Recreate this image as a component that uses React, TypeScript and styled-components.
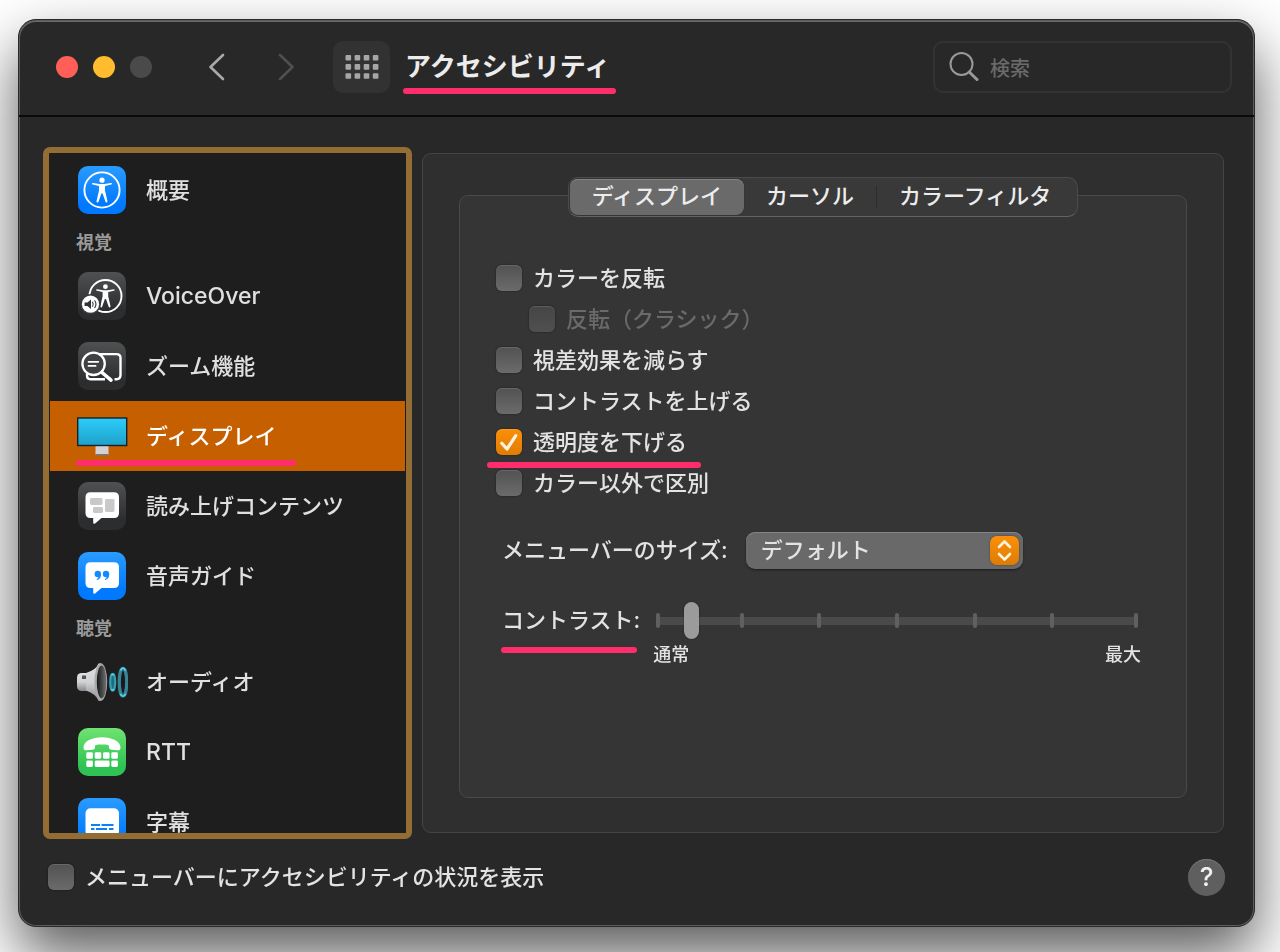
import React, { useState } from "react";
import styled, { createGlobalStyle, css } from "styled-components";

const GlobalStyle = createGlobalStyle`
  * { box-sizing: border-box; }
  body {
    margin: 0;
    background: #ffffff;
    color: #e3e3e3;
    font-family: Inter, "Noto Sans CJK JP", sans-serif;
    font-size: 22px;
    line-height: 32px;
    font-weight: 500;
  }
  button, input, select { font: inherit; color: inherit; }
`;

const Page = styled.div`
  display: flex;
  height: 100vh;
  min-height: 640px;
  padding: 19px 25px 25px 18px;
  overflow: hidden;
`;

const Window = styled.div`
  flex: 1;
  min-width: 0;
  display: flex;
  flex-direction: column;
  background: #282828;
  border: 1px solid #2a2a2a;
  border-radius: 18px;
  box-shadow: inset 0 0 0 1px #5c5c5c, inset 0 1px 0 1px #6a6a6a, 0 28px 60px rgba(0, 0, 0, 0.65);
`;

/* Toolbar */

const Toolbar = styled.header`
  display: flex;
  align-items: center;
  height: 97px;
  padding: 0 22px 1px 37px;
  border-bottom: 2px solid #0a0a0a;
`;

const Lights = styled.div`
  display: flex;
  gap: 15px;
`;

const Light = styled.button<{ $color: string }>`
  width: 22px;
  height: 22px;
  padding: 0;
  border: 0;
  border-radius: 50%;
  background: ${(p) => p.$color};
`;

const History = styled.nav`
  display: flex;
  gap: 37px;
  margin: 0 31px 0 49px;
`;

const ArrowButton = styled.button`
  display: flex;
  align-items: center;
  justify-content: center;
  width: 32px;
  height: 32px;
  padding: 0;
  border: 0;
  background: none;
  color: #a9a9a9;
  &:disabled { color: #505050; }
`;

const GridButton = styled.button`
  display: flex;
  align-items: center;
  justify-content: center;
  width: 57px;
  height: 52px;
  padding: 0;
  border: 0;
  border-radius: 10px;
  background: #323232;
`;

const Title = styled.h1`
  position: relative;
  margin: 0 auto 0 15px;
  font-size: 26px;
  line-height: 38px;
  font-weight: 700;
  color: #ececec;
`;

const SearchBox = styled.label`
  display: flex;
  align-items: center;
  gap: 11px;
  width: 299px;
  height: 52px;
  padding: 0 14px;
  border: 2px solid #333333;
  border-radius: 10px;
`;

const SearchInput = styled.input`
  flex: 1;
  min-width: 0;
  padding: 3px 0 0;
  border: 0;
  outline: 0;
  background: none;
  font-size: 20px;
  &::placeholder { color: #6a6a6a; opacity: 1; }
`;

/* Pink marker line drawn below a label */
const Marker = styled.span<{ $left: number; $right: number; $bottom: number }>`
  position: absolute;
  z-index: 1;
  left: ${(p) => p.$left}px;
  right: ${(p) => p.$right}px;
  bottom: ${(p) => p.$bottom}px;
  height: 6px;
  border-radius: 3px;
  background: #ff2d6b;
`;

/* Sidebar */

const Main = styled.main`
  flex: 1;
  min-height: 0;
  display: flex;
  gap: 10px;
  padding: 30px 30px 0 24px;
`;

const Sidebar = styled.ul`
  flex: none;
  width: 369px;
  margin: 0;
  padding: 2px 1px 0;
  list-style: none;
  overflow-y: auto;
  scrollbar-width: none;
  border: 6px solid #936d34;
  border-radius: 7px;
  background: #1e1e1e;
`;

const GroupHeading = styled.li`
  height: 36px;
  padding-left: 26px;
  font-size: 18px;
  line-height: 36px;
  font-weight: 700;
  color: #9a9a9a;
`;

const NavItem = styled.li``;

const NavButton = styled.button<{ $selected: boolean }>`
  display: flex;
  align-items: center;
  gap: 18px;
  width: 100%;
  height: 70px;
  padding: 0 26px;
  border: 0;
  text-align: left;
  background: ${(p) => (p.$selected ? "#c65f00" : "none")};
  color: ${(p) => (p.$selected ? "#ffffff" : "#e0e0e0")};
`;

const NavLabel = styled.span<{ $latin: boolean }>`
  position: relative;
  font-size: ${(p) => (p.$latin ? 23 : 22)}px;
`;

const Tile = styled.svg`
  flex: none;
  display: block;
  width: 52px;
  height: 52px;
`;

/* Right-hand panel */

const Panel = styled.section`
  flex: 1;
  min-width: 0;
  display: flex;
  flex-direction: column;
  margin: 6px 0;
  padding: 23px 36px 34px;
  border: 1px solid #454545;
  border-radius: 9px;
  background: #2f2f2f;
`;

const Tabs = styled.div`
  z-index: 1;
  align-self: center;
  display: flex;
  align-items: center;
  height: 40px;
  margin-bottom: -22px;
  padding: 1px;
  border: 1px solid #4b4b4b;
  border-bottom-color: #636363;
  border-radius: 10px;
  background: #393939;
`;

const Tab = styled.button<{ $selected: boolean }>`
  height: 36px;
  padding: 0 22px 3px;
  border: 0;
  border-radius: 8px;
  line-height: 32px;
  color: #ececec;
  background: none;
  &:last-child { padding-right: 25px; }
  ${(p) =>
    p.$selected &&
    css`
      background: #6a6a6a;
      box-shadow: inset 0 1px 0 #828282, 0 0 1px #1c1c1c;
    `}
`;

const TabDivider = styled.span`
  width: 1px;
  height: 22px;
  background: #2c2c2c;
`;

const Group = styled.div`
  flex: 1;
  min-height: 0;
  padding: 61px 45px 20px 36px;
  border: 1px solid #494949;
  border-radius: 9px;
  background: #353535;
`;

const CheckLabel = styled.label<{ $indent?: boolean; $dim?: boolean }>`
  position: relative;
  display: flex;
  align-items: center;
  gap: 11px;
  width: fit-content;
  height: 41px;
  margin-left: ${(p) => (p.$indent ? 33 : 0)}px;
  color: ${(p) => (p.$dim ? "#6a6a6a" : "#e3e3e3")};
`;

const CheckFrame = styled.span`
  position: relative;
  display: block;
  width: 26px;
  height: 26px;
`;

const CheckInput = styled.input`
  appearance: none;
  display: block;
  width: 26px;
  height: 26px;
  margin: 0;
  border-radius: 6px;
  background: linear-gradient(#525252, #6b6b6b);
  box-shadow: inset 0 1px 0 rgba(255, 255, 255, 0.12), 0 0 2px rgba(0, 0, 0, 0.5);
  &:disabled { background: linear-gradient(#454545, #505050); }
  &:checked { background: linear-gradient(#fb8f07, #df7d04); }
  &:checked + svg { display: block; }
`;

const Tick = styled.svg`
  display: none;
  position: absolute;
  inset: 0;
  pointer-events: none;
`;

const Field = styled.div<{ $gap: number; $top: number }>`
  display: flex;
  align-items: flex-start;
  gap: ${(p) => p.$gap}px;
  margin-top: ${(p) => p.$top}px;
  padding-left: 6px;
`;

const FieldLabel = styled.label`
  position: relative;
  white-space: nowrap;
  line-height: 36px;
`;

const SelectFrame = styled.div`
  position: relative;
  width: 277px;
`;

const Select = styled.select`
  appearance: none;
  display: block;
  width: 100%;
  height: 37px;
  padding: 0 40px 2px 15px;
  border: 0;
  border-radius: 9px;
  background: #696969;
  box-shadow: inset 0 1px 0 #858585, 0 1px 2px rgba(0, 0, 0, 0.5);
`;

const Stepper = styled.span`
  position: absolute;
  top: 4px;
  right: 4px;
  display: flex;
  align-items: center;
  justify-content: center;
  width: 29px;
  height: 29px;
  border-radius: 7px;
  background: linear-gradient(#fc9008, #dd7c04);
  box-shadow: 0 0 2px rgba(0, 0, 0, 0.4);
  pointer-events: none;
`;

const SliderColumn = styled.div`
  flex: 1;
  min-width: 0;
`;

const SliderFrame = styled.div`
  position: relative;
  margin: 0 3px;
  background: linear-gradient(#4a4a4a, #4a4a4a) center / 100% 8px no-repeat;
`;

const Stops = styled.div`
  position: absolute;
  inset: 11px 0;
  display: flex;
  justify-content: space-between;
`;

const Stop = styled.span`
  width: 4px;
  border-radius: 2px;
  background: #606060;
  &:first-child { margin-right: 6px; }
  &:last-child { margin-left: 6px; }
`;

const Range = styled.input`
  appearance: none;
  position: relative;
  display: block;
  width: 100%;
  height: 37px;
  margin: 0;
  background: none;
  &::-webkit-slider-thumb {
    appearance: none;
    width: 15px;
    height: 37px;
    border-radius: 8px;
    background: #9b9b9b;
    box-shadow: 0 0 2px rgba(0, 0, 0, 0.4);
  }
`;

const RangeEnds = styled.div`
  display: flex;
  justify-content: space-between;
  margin-top: 4px;
  font-size: 18px;
  line-height: 24px;
`;

const Footer = styled.footer`
  display: flex;
  align-items: center;
  justify-content: space-between;
  height: 76px;
  margin-bottom: 11px;
  padding: 0 29px;
`;

const HelpButton = styled.button`
  width: 37px;
  height: 37px;
  padding: 0;
  border: 0;
  border-radius: 50%;
  font-size: 26px;
  line-height: 36px;
  color: #f0f0f0;
  background: #5f5f5f;
  box-shadow: inset 0 1px 0 #777777;
`;

/* Icons */

type TileColor = "blue" | "gray" | "green";
const tileColors: Record<TileColor, [string, string]> = {
  blue: ["#2a9bff", "#0079ff"],
  gray: ["#505152", "#2b2d2e"],
  green: ["#6fe370", "#2fc254"],
};

function IconTile({ color, id, children }: { color: TileColor; id: string; children: React.ReactNode }) {
  const [top, bottom] = tileColors[color];
  return (
    <Tile viewBox="-2 -2 52 52" aria-hidden="true">
      <defs>
        <linearGradient id={id} x1="0" y1="0" x2="0" y2="1">
          <stop offset="0" stopColor={top} />
          <stop offset="0.8" stopColor={bottom} />
        </linearGradient>
      </defs>
      <rect width="48" height="48" rx="10" fill={`url(#${id})`} />
      {children}
    </Tile>
  );
}

const Figure = () => (
  <g fill="#fff">
    <circle cx="24" cy="14.2" r="2.6" />
    <path d="M14.8 16.9 L21.6 18.1 H26.4 L33.2 16.9 Q34 17 34 17.7 Q33.9 18.4 33.2 18.6 L27 19.9 V24.4 L29.5 35.2 Q29.5 36.4 28.6 36.5 Q27.8 36.6 27.5 35.7 L24.6 27.4 H23.4 L20.5 35.7 Q20.2 36.6 19.4 36.5 Q18.5 36.4 18.5 35.2 L21 24.4 V19.9 L14.8 18.6 Q14 18.4 14 17.7 Q14 17 14.8 16.9 Z" />
  </g>
);

const OverviewIcon = () => (
  <IconTile color="blue" id="overview">
    <circle cx="24" cy="24" r="17.6" fill="none" stroke="#fff" strokeWidth="1.9" />
    <Figure />
  </IconTile>
);

const VoiceOverIcon = () => (
  <IconTile color="gray" id="voiceover">
    <circle cx="27.5" cy="24" r="16" fill="none" stroke="#fff" strokeWidth="1.9" />
    <g transform="translate(5.1 1.5) scale(.93)"><Figure /></g>
    <circle cx="12.5" cy="32.2" r="10.2" fill="#3a3b3c" />
    <circle cx="12.5" cy="32.2" r="8.6" fill="#fff" />
    <path d="M6.6 30.5 h2.8 l3.6 -3 v9.4 l-3.6 -3 H6.6 Z" fill="#333" />
    <path d="M14.6 30.2 q1.3 2 0 4 M16.8 28.8 q2.3 3.4 0 6.8" fill="none" stroke="#333" strokeWidth="1.1" strokeLinecap="round" />
  </IconTile>
);

const ZoomIcon = () => (
  <IconTile color="gray" id="zoom">
    <path d="M21 12.1 H38.5 Q42.5 12.1 42.5 16 V33 Q42.5 37 38.5 37.2 H36.5 M9 31.5 V33.5 Q9 37.2 12.5 37.2 H27" fill="none" stroke="#fff" strokeWidth="2.4" />
    <circle cx="15.6" cy="21.8" r="11.2" fill="#404142" stroke="#fff" strokeWidth="2.3" />
    <path d="M24 30.5 L33 38.2" stroke="#fff" strokeWidth="3.6" strokeLinecap="round" />
    <path d="M10.5 19.8 H20.3 M10.5 23.9 H17.6" stroke="#fff" strokeWidth="1.7" strokeLinecap="round" />
  </IconTile>
);

const DisplayIcon = () => (
  <Tile viewBox="0 0 52 52" aria-hidden="true">
    <defs>
      <linearGradient id="screen" x1="0" y1="0" x2="0" y2="1">
        <stop offset="0" stopColor="#2ccdfb" />
        <stop offset="1" stopColor="#1ea1c8" />
      </linearGradient>
    </defs>
    <rect x="19.500" y="36" width="13" height="9" fill="#d2d2d4" />
    <rect x="19.500" y="44" width="13" height="1.500" fill="#777" />
    <rect x="1.700" y="8" width="49" height="27.500" fill="url(#screen)" stroke="#14202a" strokeWidth="1.400" />
  </Tile>
);

const Bubble = () => (
  <path d="M12.5 10.2 H36 Q41 10.2 41 15.2 V31 Q41 36 36 36 H23.5 L17.4 41.2 Q15.2 42.6 15.2 40.5 V36 H12.5 Q7.5 36 7.5 31 V15.2 Q7.5 10.2 12.5 10.2 Z" fill="#fff" />
);

const SpokenIcon = () => (
  <IconTile color="gray" id="spoken">
    <Bubble />
    <g fill="#c9c9c9">
      <rect x="12" y="16" width="12.5" height="7" rx="1.4" />
      <rect x="15" y="25" width="10" height="6" rx="1.4" />
      <rect x="27" y="17" width="9.5" height="13" rx="1.4" />
    </g>
  </IconTile>
);

const QuoteMark = ({ x }: { x: number }) => (
  <g fill="#158aff">
    <circle cx={x} cy="22" r="3.2" />
    <path d={`M${x + 3.2} 22 Q${x + 3.4} 27 ${x - 0.8} 28 Q${x - 1.8} 28 ${x - 1} 27.2 Q${x + 1} 26 ${x + 0.8} 24 Z`} />
  </g>
);

const DescriptionsIcon = () => (
  <IconTile color="blue" id="descriptions">
    <Bubble />
    <QuoteMark x={19.8} />
    <QuoteMark x={28} />
  </IconTile>
);

const AudioIcon = () => (
  <Tile viewBox="0 0 52 52" aria-hidden="true">
    <defs>
      <linearGradient id="cone" x1="0" y1="0" x2="0" y2="1">
        <stop offset="0" stopColor="#dfe1e3" />
        <stop offset="0.5" stopColor="#d0d2d4" />
        <stop offset="1" stopColor="#85878a" />
      </linearGradient>
      <linearGradient id="coneInside" x1="0" y1="0" x2="1" y2="0">
        <stop offset="0" stopColor="#161616" />
        <stop offset="1" stopColor="#707274" />
      </linearGradient>
    </defs>
    <rect x="1" y="17" width="14" height="18" rx="4.5" fill="url(#cone)" />
    <rect x="6" y="19.5" width="6" height="3.5" fill="#4f5458" />
    <path d="M10 17 Q20 14 22.5 7.5 H25 V45 H22.5 Q20 38 10 34.5 Z" fill="url(#cone)" />
    <ellipse cx="24.8" cy="26" rx="6.4" ry="18.8" fill="#a8aaac" />
    <ellipse cx="25.6" cy="26" rx="4.8" ry="16.4" fill="url(#coneInside)" />
    <ellipse cx="36.7" cy="26.2" rx="2.5" ry="8.4" fill="#226b7a" stroke="#329db4" strokeWidth="2.2" />
    <ellipse cx="47" cy="26.2" rx="3.7" ry="13.800" fill="#161c1f" stroke="#3a8495" strokeWidth="3.200" />
    <path d="M44.3 14.600 q2.7 -5 5.4 0 M44.3 37.800 q2.7 5 5.4 0 M35.400 19.500 q1.300 -2.500 2.600 0 M35.400 33 q1.300 2.500 2.600 0" fill="none" stroke="#4fd4ee" strokeWidth="1.6" />
  </Tile>
);

const RttIcon = () => (
  <IconTile color="green" id="rtt">
    <path d="M24 9.2 C34 9.2 42.5 13.5 42.5 19.2 C42.5 21.8 41.5 22.5 39 22.3 L34 21.8 C31.5 21.5 31 20.8 31 18.9 C31 16.8 30.3 16.4 24 16.4 C17.7 16.4 17 16.8 17 18.9 C17 20.8 16.5 21.5 14 21.8 L9 22.3 C6.5 22.5 5.5 21.8 5.5 19.2 C5.5 13.5 14 9.2 24 9.2 Z" fill="#fff" />
    <g fill="#fff">
      <rect x="8.3" y="24.2" width="6.6" height="6.6" rx="1.4" />
      <rect x="16.7" y="24.2" width="6.6" height="6.6" rx="1.4" />
      <rect x="25" y="24.2" width="6.6" height="6.6" rx="1.4" />
      <rect x="33.3" y="24.2" width="6.6" height="6.6" rx="1.4" />
      <rect x="8.3" y="32.4" width="6.6" height="6.6" rx="1.4" />
      <rect x="16.7" y="32.4" width="14.9" height="6.6" rx="1.4" />
      <rect x="33.3" y="32.4" width="6.6" height="6.6" rx="1.4" />
    </g>
  </IconTile>
);

const CaptionsIcon = () => (
  <IconTile color="blue" id="captions">
    <rect x="7.5" y="10.2" width="33.5" height="28" rx="5" fill="#fff" />
    <path d="M13 27 H22 M23.5 27 H35.5 M13 31 H16.5 M18 31 H29 M31 31 H35.5" stroke="#0a80ff" strokeWidth="2" />
  </IconTile>
);

const Chevron = ({ flip }: { flip?: boolean }) => (
  <svg width="18" height="30" viewBox="0 0 18 30" aria-hidden="true">
    <path d={flip ? "M3 3 L15.5 15 L3 27" : "M15 3 L2.5 15 L15 27"} fill="none" stroke="currentColor" strokeWidth="2.6" strokeLinecap="round" strokeLinejoin="round" />
  </svg>
);

const GridDots = () => (
  <svg width="34" height="26" viewBox="0 0 34 26" fill="#a6a6a6" aria-hidden="true">
    {[0, 1, 2].map((r) =>
      [0, 1, 2, 3].map((c) => <rect key={`${r}${c}`} x={0.5 + c * 9.1} y={1 + r * 9.1} width="5.6" height="5.6" rx="1" />)
    )}
  </svg>
);

function Checkbox(props: {
  text: string;
  checked?: boolean;
  disabled?: boolean;
  indent?: boolean;
  marked?: boolean;
}) {
  return (
    <CheckLabel $indent={props.indent} $dim={props.disabled}>
      <CheckFrame>
        <CheckInput type="checkbox" defaultChecked={props.checked} disabled={props.disabled} />
        <Tick width="26" height="26" viewBox="0 0 26 26" aria-hidden="true">
          <path d="M5.8 14.2 L11 20 L19.8 6.6" fill="none" stroke="#fff3e0" strokeWidth="3.2" strokeLinecap="round" strokeLinejoin="round" />
        </Tick>
      </CheckFrame>
      {props.text}
      {props.marked && <Marker $left={-9} $right={-14} $bottom={-6} />}
    </CheckLabel>
  );
}

type Entry = { heading: string } | { label: string; icon: () => React.ReactElement };

const entries: Entry[] = [
  { label: "概要", icon: OverviewIcon },
  { heading: "視覚" },
  { label: "VoiceOver", icon: VoiceOverIcon },
  { label: "ズーム機能", icon: ZoomIcon },
  { label: "ディスプレイ", icon: DisplayIcon },
  { label: "読み上げコンテンツ", icon: SpokenIcon },
  { label: "音声ガイド", icon: DescriptionsIcon },
  { heading: "聴覚" },
  { label: "オーディオ", icon: AudioIcon },
  { label: "RTT", icon: RttIcon },
  { label: "字幕", icon: CaptionsIcon },
];

const tabs = ["ディスプレイ", "カーソル", "カラーフィルタ"];

export default function App() {
  const [section, setSection] = useState("ディスプレイ");
  const [tab, setTab] = useState(0);

  return (
    <>
      <GlobalStyle />
      <Page>
        <Window>
          <Toolbar>
            <Lights>
              <Light $color="#ff5f57" aria-label="閉じる" />
              <Light $color="#febc2e" aria-label="しまう" />
              <Light $color="#4a4a4a" aria-label="拡大" disabled />
            </Lights>
            <History>
              <ArrowButton aria-label="戻る"><Chevron /></ArrowButton>
              <ArrowButton aria-label="進む" disabled><Chevron flip /></ArrowButton>
            </History>
            <GridButton aria-label="すべてを表示"><GridDots /></GridButton>
            <Title>
              アクセシビリティ
              <Marker $left={-2} $right={-6} $bottom={-8} />
            </Title>
            <SearchBox>
              <svg width="30" height="30" viewBox="0 0 30 30" fill="none" stroke="#999" aria-hidden="true">
                <circle cx="12.5" cy="12" r="11" strokeWidth="2" />
                <path d="M20.2 20 L28 27.5" strokeWidth="3" strokeLinecap="round" />
              </svg>
              <SearchInput type="search" placeholder="検索" aria-label="検索" />
            </SearchBox>
          </Toolbar>

          <Main>
            <Sidebar>
              {entries.map((e) => {
                if ("heading" in e) return <GroupHeading key={e.heading}>{e.heading}</GroupHeading>;
                const Icon = e.icon;
                return (
                  <NavItem key={e.label}>
                    <NavButton $selected={e.label === section} onClick={() => setSection(e.label)}>
                      <Icon />
                      <NavLabel $latin={/^[A-Za-z]+$/.test(e.label)}>
                        {e.label}
                        {e.label === "ディスプレイ" && <Marker $left={-70} $right={-20} $bottom={-14} />}
                      </NavLabel>
                    </NavButton>
                  </NavItem>
                );
              })}
            </Sidebar>

            <Panel>
              <Tabs role="tablist">
                {tabs.map((name, i) => (
                  <React.Fragment key={name}>
                    {i === 2 && <TabDivider />}
                    <Tab role="tab" aria-selected={i === tab} $selected={i === tab} onClick={() => setTab(i)}>
                      {name}
                    </Tab>
                  </React.Fragment>
                ))}
              </Tabs>
              <Group>
                <Checkbox text="カラーを反転" />
                <Checkbox text="反転（クラシック）" disabled indent />
                <Checkbox text="視差効果を減らす" />
                <Checkbox text="コントラストを上げる" />
                <Checkbox text="透明度を下げる" checked marked />
                <Checkbox text="カラー以外で区別" />
                <Field $gap={18} $top={29}>
                  <FieldLabel htmlFor="menubar-size">メニューバーのサイズ:</FieldLabel>
                  <SelectFrame>
                    <Select id="menubar-size" defaultValue="default">
                      <option value="default">デフォルト</option>
                      <option value="large">大</option>
                    </Select>
                    <Stepper>
                      <svg width="17" height="23" viewBox="0 0 17 23" fill="none" stroke="#fff3e0" strokeWidth="2.6" strokeLinecap="round" strokeLinejoin="round" aria-hidden="true">
                        <path d="M3 8 L8.5 2.5 L14 8 M3 15 L8.5 20.5 L14 15" />
                      </svg>
                    </Stepper>
                  </SelectFrame>
                </Field>
                <Field $gap={13} $top={33}>
                  <FieldLabel htmlFor="contrast">
                    コントラスト:
                    <Marker $left={-1} $right={3} $bottom={-15} />
                  </FieldLabel>
                  <SliderColumn>
                    <SliderFrame>
                      <Stops>
                        {[0, 1, 2, 3, 4, 5, 6].map((n) => <Stop key={n} />)}
                      </Stops>
                      <Range id="contrast" type="range" min="0" max="100" defaultValue="6" />
                    </SliderFrame>
                    <RangeEnds>
                      <span>通常</span>
                      <span>最大</span>
                    </RangeEnds>
                  </SliderColumn>
                </Field>
              </Group>
            </Panel>
          </Main>

          <Footer>
            <Checkbox text="メニューバーにアクセシビリティの状況を表示" />
            <HelpButton aria-label="ヘルプ">?</HelpButton>
          </Footer>
        </Window>
      </Page>
    </>
  );
}
